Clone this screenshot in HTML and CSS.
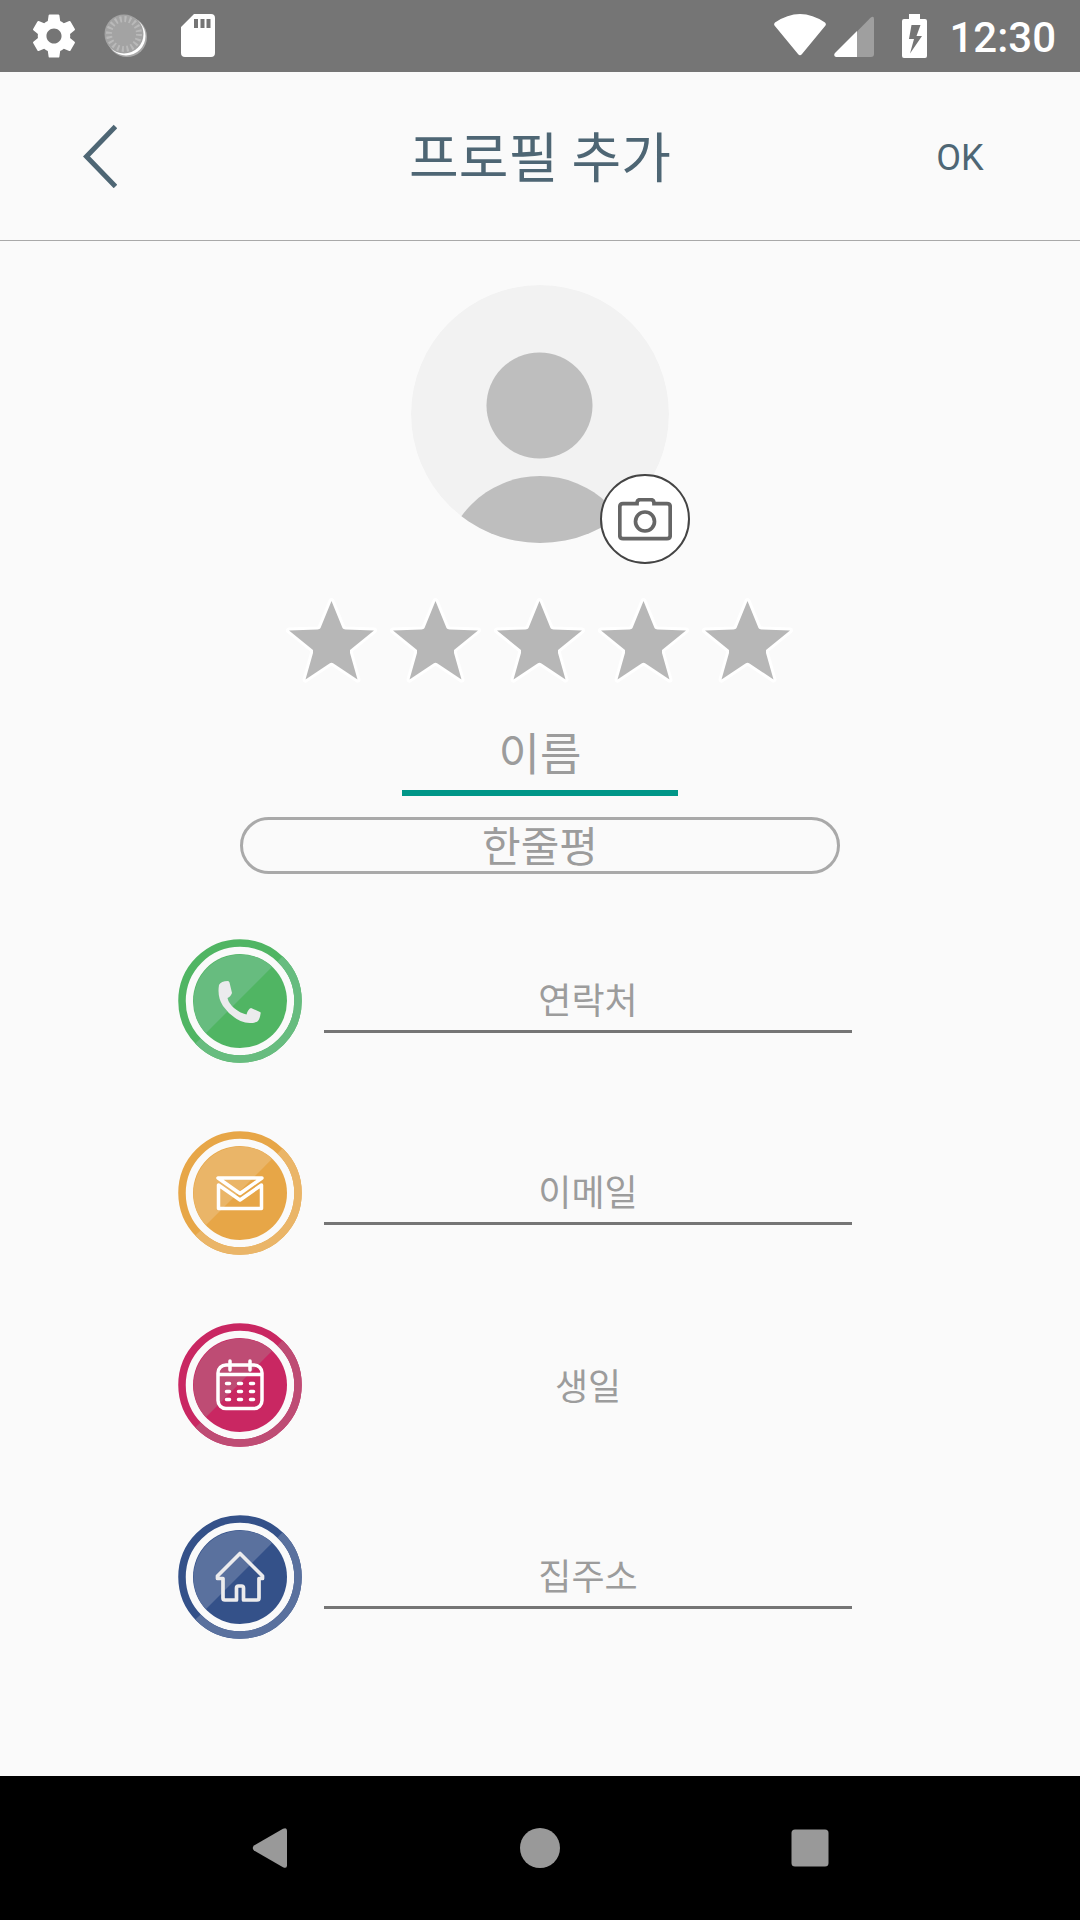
FILE: index.html
```html
<!DOCTYPE html>
<html lang="ko">
<head>
<meta charset="utf-8">
<meta name="viewport" content="width=device-width, initial-scale=1">
<title>프로필 추가</title>
<link rel="stylesheet" href="styles.css">
</head>
<body>
<div class="screen">
  <div class="status">
    <div class="status-group notices">
      <svg width="48" height="48" viewBox="0 0 24 24" aria-hidden="true"><g transform="translate(12 12) scale(1.08) translate(-12 -12)"><path fill="#fff" d="M19.43 12.98c.04-.32.07-.64.07-.98s-.03-.66-.07-.98l2.11-1.65c.19-.15.24-.42.12-.64l-2-3.46c-.12-.22-.39-.3-.61-.22l-2.49 1c-.52-.4-1.08-.73-1.69-.98l-.38-2.65C14.46 2.18 14.25 2 14 2h-4c-.25 0-.46.18-.49.42l-.38 2.65c-.61.25-1.17.59-1.69.98l-2.49-1c-.23-.09-.49 0-.61.22l-2 3.46c-.13.22-.07.49.12.64l2.11 1.65c-.04.32-.07.65-.07.98s.03.66.07.98l-2.11 1.65c-.19.15-.24.42-.12.64l2 3.46c.12.22.39.3.61.22l2.49-1c.52.4 1.08.73 1.69.98l.38 2.65c.03.24.24.42.49.42h4c.25 0 .46-.18.49-.42l.38-2.65c.61-.25 1.17-.59 1.69-.98l2.49 1c.23.09.49 0 .61-.22l2-3.46c.12-.22.07-.49-.12-.64l-2.11-1.65zM12 15.500c-1.930 0-3.500-1.570-3.500-3.500s1.570-3.500 3.500-3.500 3.500 1.570 3.500 3.500-1.570 3.500-3.500 3.500z"/></g></svg>
      <svg width="48" height="48" viewBox="0 0 48 48" aria-hidden="true"><circle cx="25" cy="25" r="20" fill="#a9a9a9"/><circle cx="24" cy="24" r="19.500" fill="#fff"/><circle cx="22" cy="22" r="19.500" fill="#a3a3a3"/><circle cx="22" cy="22" r="15" fill="none" stroke="#b9b9b9" stroke-width="6" stroke-dasharray="2 2.712"/></svg>
      <svg width="48" height="48" viewBox="0 0 48 48" aria-hidden="true"><path fill="#fff" fill-rule="evenodd" d="M20 2h17a4 4 0 0 1 4 4v35a4 4 0 0 1-4 4H11a4 4 0 0 1-4-4V15zM20 7v9h4V7zM26.500 7v9h4V7zM32.500 7v9h4V7z"/></svg>
    </div>
    <div class="status-group signals">
      <svg width="52" height="44" viewBox="0 0 52 44" aria-hidden="true"><path fill="#fff" d="M1 8.500Q26-8.500 51 8.500q1.500 1.500.500 3L28 40q-2 2.500-4 0L.500 11.500Q-.500 10 1 8.500z"/></svg>
      <svg width="40" height="44" viewBox="0 0 40 44" aria-hidden="true"><path fill="#9f9f9f" d="M23 17.500 36.500 3.700Q40 1.500 40 5v35q0 3-3 3H23z"/><path fill="#fff" d="M23 17v26H2q-3-1-1-4z"/></svg>
      <svg class="battery" width="26" height="44" viewBox="0 0 26 44" aria-hidden="true"><path fill="#fff" fill-rule="evenodd" d="M7 0h11v5h5q2 0 2 2v35q0 2-2 2H2q-2 0-2-2V7q0-2 2-2h5zM9.500 11 7 25h5L8 39.500 20 22h-5.500L18.500 11z"/></svg>
      <span class="clock">12:30</span>
    </div>
  </div>

  <header class="bar">
    <button class="back" type="button" aria-label="뒤로"><svg width="34" height="64" viewBox="0 0 34 64" aria-hidden="true"><path d="M32.500 2.500 3.500 32.500l29 30" fill="none" stroke="#4e6674" stroke-width="5"/></svg></button>
    <h1 class="title">프로필 추가</h1>
    <button class="ok" type="submit" form="profile">OK</button>
  </header>

  <main>
    <form class="profile" id="profile">
      <div class="avatar">
        <svg width="258" height="258" viewBox="0 0 258 258" aria-hidden="true"><clipPath id="round"><circle cx="129" cy="129" r="129"/></clipPath><g clip-path="url(#round)"><circle cx="129" cy="129" r="129" fill="#f2f2f2"/><circle cx="128.500" cy="120.500" r="53" fill="#bebebe"/><circle cx="129" cy="288" r="97" fill="#bebebe"/></g></svg>
        <button class="camera" type="button" aria-label="사진"><svg width="54" height="43" viewBox="0 0 54 43" aria-hidden="true"><g fill="none" stroke="#666" stroke-width="3.700"><path d="M18 5.600H5q-3.200 0-3.200 3.200v28.700q0 3.200 3.200 3.200h44q3.200 0 3.200-3.200V8.800q0-3.200-3.200-3.200H36q0-3.900-3-3.900H22q-3 0-3 3.900z"/><circle cx="27" cy="23.500" r="9.500"/></g></svg></button>
      </div>

      <fieldset class="rating">
        <legend class="unseen">별점</legend>
        <label class="star"><input class="unseen" type="radio" name="rating" value="1" aria-label="1점"><svg width="104" height="96" viewBox="0 0 104 96" aria-hidden="true"><use href="#star"/></svg></label>
        <label class="star"><input class="unseen" type="radio" name="rating" value="2" aria-label="2점"><svg width="104" height="96" viewBox="0 0 104 96" aria-hidden="true"><use href="#star"/></svg></label>
        <label class="star"><input class="unseen" type="radio" name="rating" value="3" aria-label="3점"><svg width="104" height="96" viewBox="0 0 104 96" aria-hidden="true"><use href="#star"/></svg></label>
        <label class="star"><input class="unseen" type="radio" name="rating" value="4" aria-label="4점"><svg width="104" height="96" viewBox="0 0 104 96" aria-hidden="true"><use href="#star"/></svg></label>
        <label class="star"><input class="unseen" type="radio" name="rating" value="5" aria-label="5점"><svg width="104" height="96" viewBox="0 0 104 96" aria-hidden="true"><use href="#star"/></svg></label>
      </fieldset>

      <input class="name" type="text" name="name" placeholder="이름" aria-label="이름">
      <input class="comment" type="text" name="comment" placeholder="한줄평" aria-label="한줄평">

      <div class="contacts">
        <div class="row">
          <label class="badge green" for="phone"><svg width="124" height="124" viewBox="0 0 124 124" aria-hidden="true"><use href="#disc"/><path fill="#ebebed" d="M41 46q2-4 9-4 1 0 1.500 1.500L54 54q-1.500 4-4.500 5 1 5 6.500 10 6 5 12.500 6.500Q70 70 73 69l9 4q1 0 .500 2-1 7-4 8-8 2.500-16-1Q52 77 45 67q-6-9-4-21z"/></svg></label>
          <input class="field" id="phone" type="tel" placeholder="연락처">
        </div>
        <div class="row">
          <label class="badge amber" for="email"><svg width="124" height="124" viewBox="0 0 124 124" aria-hidden="true"><use href="#disc"/><g fill="none" stroke="#fff" stroke-width="3.500"><path stroke-linejoin="round" d="M40 47h44L62 62.500z"/><path stroke-linejoin="round" d="M40.500 54v23.500h43V54L62 69z"/></g></svg></label>
          <input class="field" id="email" type="email" placeholder="이메일">
        </div>
        <div class="row">
          <label class="badge pink" for="birthday"><svg width="124" height="124" viewBox="0 0 124 124" aria-hidden="true"><use href="#disc"/><g fill="none" stroke="#fff" stroke-width="3.500"><rect x="40" y="42" width="44" height="43.500" rx="8"/><path d="M40 51.500h44"/><path stroke-linecap="round" d="M52 38v9M72 38v9"/><path stroke-linecap="round" d="M48.500 60.500h3m9 0h3m9 0h3M48.500 68.500h3m9 0h3m9 0h3M48.500 76.500h3m9 0h3m9 0h3"/></g></svg></label>
          <button class="field pick" id="birthday" type="button">생일</button>
        </div>
        <div class="row">
          <label class="badge blue" for="home"><svg width="124" height="124" viewBox="0 0 124 124" aria-hidden="true"><use href="#disc"/><path fill="none" stroke="#ebebed" stroke-width="3.700" stroke-linejoin="round" d="M62 38.500 39.500 61v2.500H45V83q0 2 2 2h11.500V73q0-2 2-2h3q2 0 2 2v12H79q2 0 2-2V63.500h3.500V61z"/></svg></label>
          <input class="field" id="home" type="text" placeholder="집주소">
        </div>
      </div>
    </form>
  </main>

  <nav class="keys">
    <button class="key" type="button" aria-label="이전"><svg width="40" height="40" viewBox="0 0 40 40" aria-hidden="true"><path fill="#999" d="M33 .800q4-2 4 2v34.400q0 4-4 2L4 22.500q-2.500-2.500 0-5z"/></svg></button>
    <button class="key" type="button" aria-label="홈"><svg width="40" height="40" viewBox="0 0 40 40" aria-hidden="true"><circle cx="20" cy="20" r="20" fill="#999"/></svg></button>
    <button class="key" type="button" aria-label="최근 앱"><svg width="40" height="40" viewBox="0 0 40 40" aria-hidden="true"><rect x="1.500" y="1.500" width="37" height="37" rx="3.500" fill="#999"/></svg></button>
  </nav>
</div>

<svg class="unseen" aria-hidden="true">
  <defs>
    <path id="star" fill="#b7b7b7" stroke="#fff" stroke-width="6" stroke-linejoin="round" paint-order="stroke" d="M51.500 7 62.500 34q.500 1 3 1.500L94 36.500 70 56v3L77.500 85.500 53.500 69.500q-2-1.500-4 0L25.500 85.500l7.500-26.500v-3L9 36.500 37.500 35.500q2.500-.500 3-1.500z"/>
    <g id="disc" fill="none" stroke-width="7.500">
      <circle class="main-ring" cx="62" cy="62" r="58"/>
      <path class="soft-ring" d="M102 20A58 58 0 1 1 20 102"/>
      <circle class="main-fill" cx="62" cy="62" r="47"/>
      <path class="soft-fill" d="M94.200 27.800A47 47 0 0 0 27.800 94.200z"/>
    </g>
  </defs>
</svg>
</body>
</html>
```
FILE: styles.css
```css
* {
  box-sizing: border-box;
}

body {
  margin: 0;
  background: #fafafa;
  color: #4e6674;
  font-family: Roboto, "Noto Sans CJK KR", sans-serif;
}

svg {
  display: block;
}

button,
input {
  padding: 0;
  border: 0;
  border-radius: 0;
  background: none;
  color: inherit;
  font-family: inherit;
}

input::placeholder {
  color: #9c9c9c;
  opacity: 1;
}

.unseen {
  position: absolute;
  width: 1px;
  height: 1px;
  margin: 0;
  overflow: hidden;
  opacity: 0;
}

.screen {
  display: flex;
  flex-direction: column;
  min-height: 100vh;
}

/* Status bar */
.status {
  display: flex;
  justify-content: space-between;
  align-items: center;
  height: 72px;
  padding: 0 24px 0 30px;
  background: #757575;
  color: #fff;
}

.status-group {
  display: flex;
  align-items: center;
}

.notices {
  gap: 24px;
}

.signals {
  gap: 8px;
}

.battery {
  margin: 0 13px 0 20px;
}

.clock {
  padding-top: 4px;
  font-size: 42px;
  font-weight: 500;
  line-height: 48px;
}

/* Title bar */
.bar {
  display: grid;
  grid-template-columns: 200px 1fr 200px;
  align-items: center;
  height: 169px;
  border-bottom: 1px solid #a9a9a9;
}

.back {
  display: grid;
  place-items: center;
}

.title {
  margin: 0;
  padding-top: 8px;
  font-size: 54px;
  font-weight: 400;
  line-height: 80px;
  text-align: center;
}

.ok {
  padding: 4px 40px 0 0;
  font-size: 36px;
  line-height: 48px;
}

/* Profile form */
main {
  flex: 1;
}

.profile {
  display: flex;
  flex-direction: column;
  align-items: center;
  padding: 44px 0;
}

.avatar {
  position: relative;
}

.camera {
  position: absolute;
  right: -21px;
  bottom: -21px;
  display: grid;
  place-items: center;
  width: 90px;
  height: 90px;
  border: 2px solid #444;
  border-radius: 50%;
  background: #fff;
}

.rating {
  display: flex;
  margin: 51px 0 0;
  padding: 0;
  border: 0;
}

.name {
  width: 276px;
  height: 72px;
  margin-top: 34px;
  padding-bottom: 4px;
  border-bottom: 6px solid #009688;
  font-size: 45px;
  text-align: center;
}

.comment {
  width: 600px;
  max-width: 90%;
  height: 57px;
  margin-top: 21px;
  padding-top: 4px;
  border: 3px solid #a9a9a9;
  border-radius: 30px;
  font-size: 42px;
  text-align: center;
}

.contacts {
  display: flex;
  flex-direction: column;
  gap: 68px;
  align-self: stretch;
  margin-top: 65px;
  padding: 0 228px 0 178px;
}

.row {
  display: flex;
  align-items: center;
  gap: 22px;
}

.field {
  flex: 1;
  min-width: 0;
  height: 64px;
  padding-top: 4px;
  border-bottom: 3px solid #757575;
  font-size: 36px;
  text-align: center;
}

.pick {
  padding: 0 0 2px;
  border-bottom: 0;
  color: #9c9c9c;
}

/* Round two-tone badges */
.main-ring {
  stroke: var(--main);
}

.soft-ring {
  stroke: var(--soft);
}

.main-fill {
  fill: var(--main);
}

.soft-fill {
  fill: var(--soft);
}

.green {
  --main: #50b563;
  --soft: #67bc7f;
}

.amber {
  --main: #e7a647;
  --soft: #eab568;
}

.pink {
  --main: #c92762;
  --soft: #be4c74;
}

.blue {
  --main: #345189;
  --soft: #5a719e;
}

/* System navigation */
.keys {
  display: flex;
  justify-content: center;
  gap: 150px;
  height: 144px;
  background: #000;
}

.key {
  display: grid;
  place-items: center;
  width: 120px;
}
```
